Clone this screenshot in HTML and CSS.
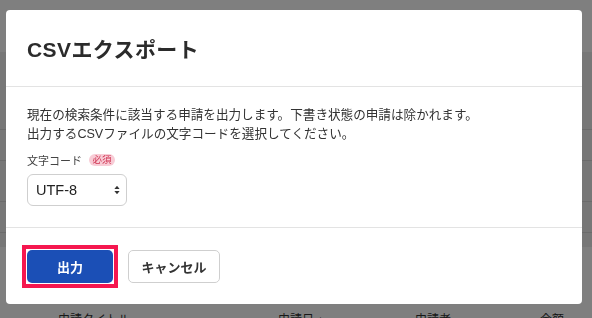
FILE: index.html
```html
<!DOCTYPE html>
<html lang="ja">
<head>
<meta charset="utf-8">
<title>CSVエクスポート</title>
<link rel="stylesheet" href="styles.css">
</head>
<body>
<div class="page">
  <div class="topbar"></div>
  <div class="panel">
    <div class="row r1"></div>
    <div class="row r2"></div>
    <div class="row r3"></div>
    <div class="row r4"></div>
  </div>
  <div class="list">
    <div class="thead">
      <span class="th c1">申請タイトル</span>
      <span class="th c2">申請日 ↓</span>
      <span class="th c3">申請者</span>
      <span class="th c4">金額</span>
    </div>
  </div>
</div>

<div class="overlay">
  <div class="modal" role="dialog" aria-labelledby="mt">
    <div class="modal-header">
      <h2 id="mt" class="modal-title">CSVエクスポート</h2>
    </div>
    <div class="modal-body">
      <p class="desc">現在の検索条件に該当する申請を出力します。下書き状態の申請は除かれます。<br>出力するCSVファイルの文字コードを選択してください。</p>
      <div class="field-label">
        <span class="label-text">文字コード</span>
        <span class="badge">必須</span>
      </div>
      <div class="select-wrap">
        <select class="select">
          <option>UTF-8</option>
          <option>Shift_JIS</option>
        </select>
        <svg class="select-arrow" width="6" height="10" viewBox="0 0 6 10" aria-hidden="true">
          <path d="M3 0.8 L5.6 4 H0.4 Z" fill="#333"/>
          <path d="M3 9.2 L5.6 6 H0.4 Z" fill="#333"/>
        </svg>
      </div>
    </div>
    <div class="modal-footer">
      <span class="focus-ring"><button class="btn btn-primary">出力</button></span>
      <button class="btn btn-secondary">キャンセル</button>
    </div>
  </div>
</div>
</body>
</html>
```

FILE: styles.css
```css
* { box-sizing: border-box; }

html, body {
  margin: 0;
  padding: 0;
}

body {
  width: 592px;
  height: 318px;
  overflow: hidden;
  background: #ffffff;
  font-family: "Liberation Sans", "Noto Sans CJK JP", sans-serif;
  color: #333;
}

/* underlying page (dimmed by overlay) */
.page {
  width: 592px;
}
.topbar {
  height: 52px;
  background: #ffffff;
}
.panel {
  height: 195px;
  background: #eeeeee;
  padding-top: 77px;
}
.row {
  border-top: 1px solid #d6d6d6;
}
.r1 { height: 31px; }
.r2 { height: 41px; }
.r3 { height: 31px; }
.r4 { height: 14px; }

.list {
  background: #ffffff;
  height: 80px;
  padding-top: 65px;
}
.thead {
  display: flex;
  font-size: 12px;
  color: #333;
  line-height: 16px;
}
.th.c1 { margin-left: 58px; width: 220px; }
.th.c2 { width: 137px; }
.th.c3 { width: 125px; }

/* overlay + modal */
.overlay {
  position: fixed;
  inset: 0;
  background: rgba(0, 0, 0, 0.5);
  display: flex;
  align-items: flex-start;
  padding: 10px 0 0 6px;
}

.modal {
  width: 576px;
  background: #ffffff;
  border-radius: 4px;
  overflow: hidden;
}

.modal-header {
  height: 77px;
  display: flex;
  align-items: center;
  padding: 0 21px;
  border-bottom: 1px solid #e3e3e3;
}
.modal-title {
  margin: 0;
  font-size: 21px;
  font-weight: 700;
  color: #2b2b2b;
  letter-spacing: 0.4px;
}

.modal-body {
  padding: 19px 21px 21px;
}
.desc {
  margin: 0;
  font-size: 12.6px;
  line-height: 19px;
  color: #333;
}

.field-label {
  display: flex;
  align-items: center;
  gap: 7px;
  margin-top: 8px;
  height: 16px;
}
.label-text {
  font-size: 11px;
  color: #444;
}
.badge {
  font-size: 9.5px;
  line-height: 12px;
  padding: 0 3.5px;
  border-radius: 6px;
  background: #f8ccd6;
  color: #cf3452;
}

.select-wrap {
  position: relative;
  width: 100px;
  margin-top: 6px;
}
.select {
  appearance: none;
  -webkit-appearance: none;
  width: 100px;
  height: 32px;
  border: 1px solid #cfcfcf;
  border-radius: 6px;
  background: #ffffff;
  padding: 0 0 0 8px;
  font-family: "Liberation Sans", "Noto Sans CJK JP", sans-serif;
  font-size: 14.5px;
  color: #222;
  display: block;
}
.select-arrow {
  position: absolute;
  right: 7px;
  top: 11px;
}

.modal-footer {
  display: flex;
  align-items: center;
  gap: 10px;
  padding: 17px 16px 16px;
  border-top: 1px solid #e3e3e3;
}

.focus-ring {
  display: flex;
  border: 4px solid #f5174f;
  padding: 1px;
  background: #ffffff;
}

.btn {
  height: 33px;
  border-radius: 5px;
  font-family: "Liberation Sans", "Noto Sans CJK JP", sans-serif;
  font-size: 13px;
  font-weight: 700;
  cursor: pointer;
}
.btn-primary {
  width: 86px;
  background: #1b4fb6;
  color: #ffffff;
  border: none;
}
.btn-secondary {
  width: 92px;
  background: #ffffff;
  color: #333;
  border: 1px solid #cfcfcf;
}
```
